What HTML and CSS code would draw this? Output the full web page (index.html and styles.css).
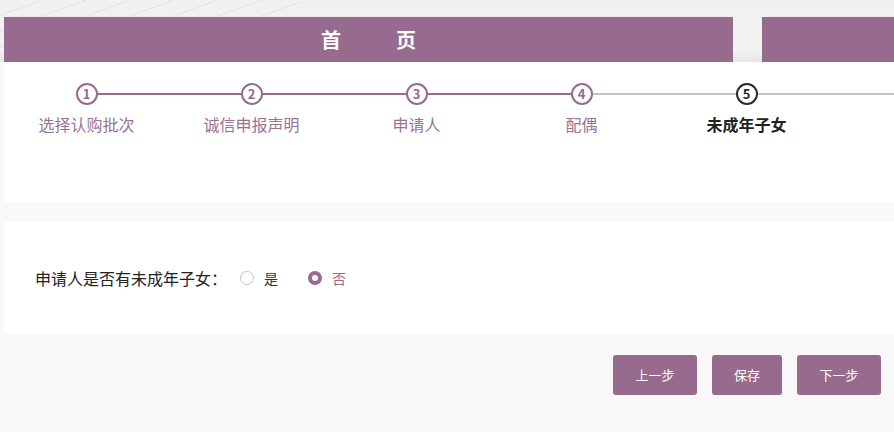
FILE: index.html
```html
<!DOCTYPE html>
<html lang="zh-CN">

<head>
    <meta charset="UTF-8">
    <meta name="viewport" content="width=device-width, initial-scale=1.0">
    <title>未成年子女</title>

    <link rel="stylesheet" href="styles.css">
</head>

<body>
    <div class="topbar">
        <div class="title-bar"><span>首</span><span>页</span></div>
        <div class="title-bar-right"></div>
    </div>

    <div class="content">
        <!-- 步骤条 -->
        <div class="panel steps-panel">
            <div class="steps">
                <div class="step done first">
                    <div class="step-num">1</div>
                    <div class="step-label">选择认购批次</div>
                </div>
                <div class="step done">
                    <div class="step-num">2</div>
                    <div class="step-label">诚信申报声明</div>
                </div>
                <div class="step done">
                    <div class="step-num">3</div>
                    <div class="step-label">申请人</div>
                </div>
                <div class="step done last-done">
                    <div class="step-num">4</div>
                    <div class="step-label">配偶</div>
                </div>
                <div class="step active">
                    <div class="step-num">5</div>
                    <div class="step-label">未成年子女</div>
                </div>
                <div class="steps-rest"></div>
            </div>
        </div>

        <!-- 表单 -->
        <div class="panel form-panel">
            <div class="form-row">
                <span class="form-label">申请人是否有未成年子女：</span>
                <label class="radio"><span class="radio-dot"></span><span>是</span></label>
                <label class="radio checked"><span class="radio-dot"></span><span>否</span></label>
            </div>
        </div>

        <div class="btn-bar">
            <div class="btn btn-wide">上一步</div>
            <div class="btn">保存</div>
            <div class="btn btn-wide">下一步</div>
        </div>
    </div>
</body>

</html>
```

FILE: styles.css
```css
* {
    box-sizing: border-box;
}

body {
    margin: 0;
    background-color: #f9f9f9;
    font-family: "Noto Sans CJK SC", "Noto Sans", sans-serif;
    overflow: hidden;
}

/* 顶部标题 */
.topbar {
    height: 62px;
    padding: 17px 0 0 4px;
    display: flex;
    background:
        repeating-linear-gradient(160deg, transparent 0 14px, rgba(0, 0, 0, .05) 14px 15px) left top / 300px 62px no-repeat,
        linear-gradient(to bottom, #f0f0f0, #f2f2f2 80%, #e6e6e6);
}

.title-bar {
    width: 729px;
    height: 45px;
    background-color: #966b8e;
    display: flex;
    justify-content: center;
    align-items: center;
    gap: 55px;
    color: #fff;
    font-size: 20px;
    font-weight: 700;
}

.title-bar-right {
    flex: 1;
    height: 45px;
    margin-left: 29px;
    background-color: #966b8e;
}

.content {
    padding-left: 4px;
}

.panel {
    background-color: #fff;
}

/* 步骤条 */
.steps-panel {
    height: 140px;
    padding-top: 21px;
    margin-bottom: 20px;
}

.steps {
    display: flex;
}

.step {
    width: 165px;
    position: relative;
    display: flex;
    flex-direction: column;
    align-items: center;
}

.step::before,
.step::after {
    content: "";
    position: absolute;
    top: 10px;
    height: 2px;
    width: 50%;
    background-color: #c3c3c9;
}

.step::before {
    left: 0;
}

.step::after {
    right: 0;
}

.step.done::before,
.step.done::after {
    background-color: #966b8e;
}

.step.first::before {
    display: none;
}

.step.last-done::after {
    background-color: #c3c3c9;
}

.step-num {
    position: relative;
    z-index: 1;
    width: 22px;
    height: 22px;
    border: 2px solid #966b8e;
    border-radius: 50%;
    background-color: #fff;
    color: #966b8e;
    font-size: 13px;
    font-weight: 700;
    line-height: 18px;
    text-align: center;
}

.step-label {
    margin-top: 9px;
    font-size: 16px;
    line-height: 20px;
    color: #9a7394;
}

.step.active .step-num {
    border-color: #2b2b2b;
    color: #2b2b2b;
}

.step.active .step-label {
    color: #222;
    font-weight: 700;
}

.steps-rest {
    flex: 1;
    height: 2px;
    margin-top: 10px;
    background-color: #c3c3c9;
}

/* 表单 */
.form-panel {
    height: 112px;
    padding-left: 31px;
    display: flex;
    align-items: center;
}

.form-row {
    display: flex;
    align-items: center;
    font-size: 16px;
    color: #222;
}

.form-label {
    margin-right: 13px;
}

.radio {
    display: flex;
    align-items: center;
    gap: 10px;
    margin-right: 30px;
    font-size: 14px;
    color: #333;
}

.radio-dot {
    width: 14px;
    height: 14px;
    border: 1px solid #c6c6c6;
    border-radius: 50%;
    background-color: #fff;
}

.radio.checked {
    color: #966b8e;
}

.radio.checked .radio-dot {
    border: 4px solid #966b8e;
    background-color: #fff;
}

/* 按钮 */
.btn-bar {
    display: flex;
    justify-content: flex-end;
    gap: 15px;
    padding: 21px 13px 0 0;
}

.btn {
    width: 70px;
    height: 40px;
    line-height: 40px;
    text-align: center;
    background-color: #966b8e;
    color: #fff;
    font-size: 13px;
    border-radius: 3px;
    cursor: pointer;
}

.btn-wide {
    width: 84px;
}
```
